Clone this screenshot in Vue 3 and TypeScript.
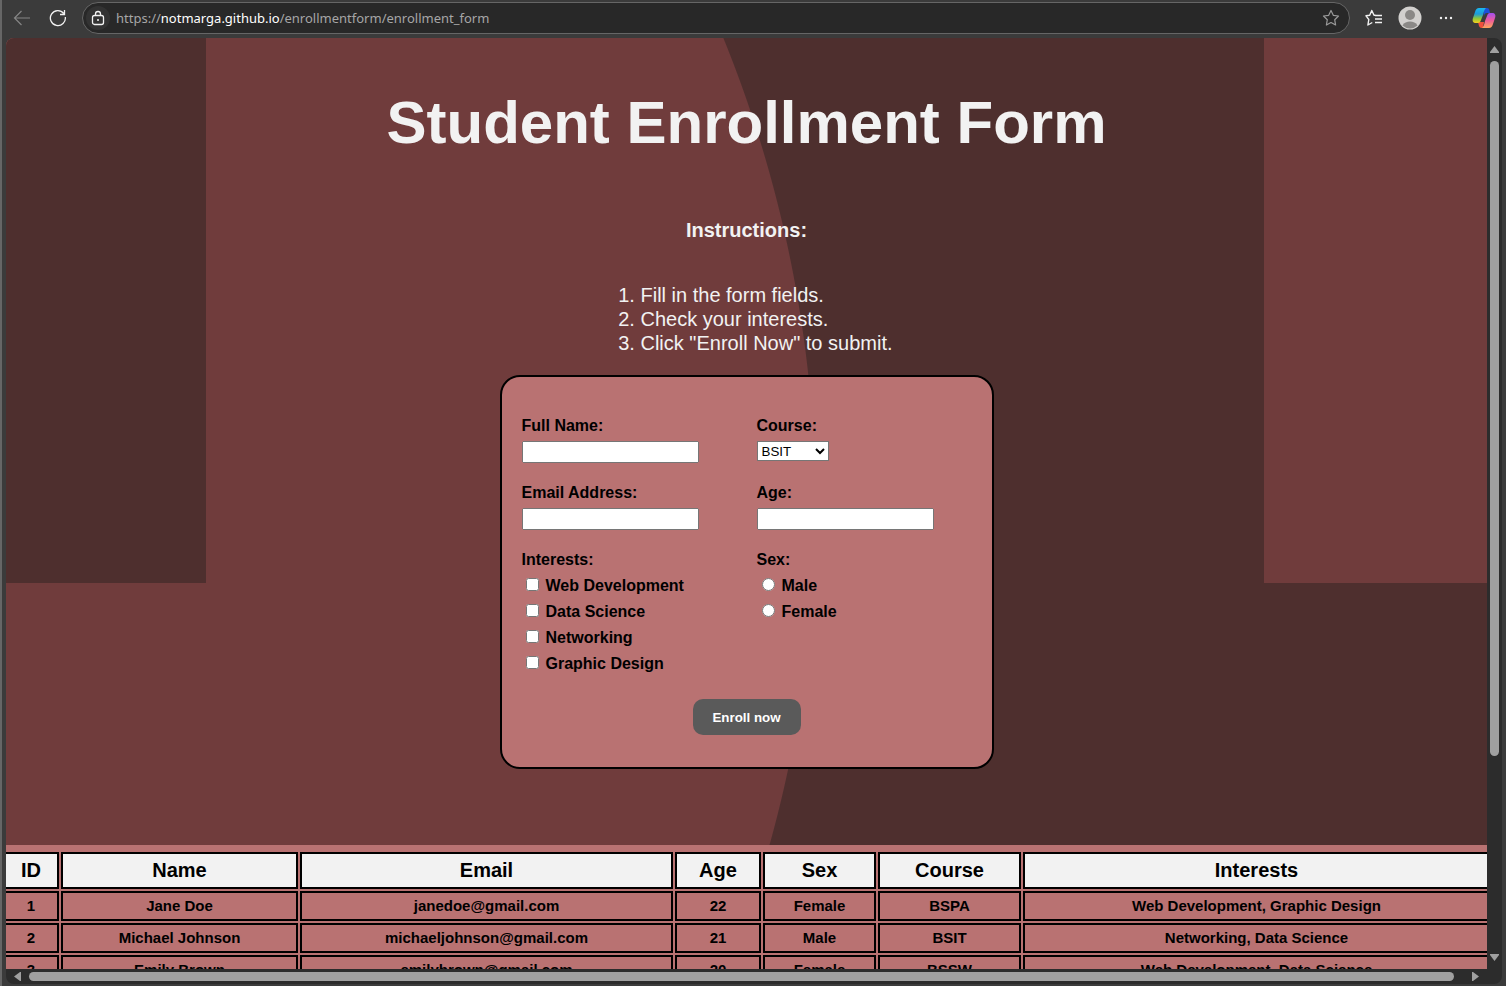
<script setup lang="ts">
import { reactive } from 'vue'

interface Enrollment {
  id: number
  name: string
  email: string
  age: number
  sex: string
  course: string
  interests: string
}

const steps: string[] = [
  'Fill in the form fields.',
  'Check your interests.',
  'Click "Enroll Now" to submit.',
]
const courses: string[] = ['BSIT', 'BSPA', 'BSSW']
const interestOptions: string[] = ['Web Development', 'Data Science', 'Networking', 'Graphic Design']
const sexes: string[] = ['Male', 'Female']
const columns: string[] = ['ID', 'Name', 'Email', 'Age', 'Sex', 'Course', 'Interests']

const form = reactive({
  name: '',
  email: '',
  course: 'BSIT',
  age: '',
  sex: '',
  interests: [] as string[],
})

const rows = reactive<Enrollment[]>([
  { id: 1, name: 'Jane Doe', email: 'janedoe@gmail.com', age: 22, sex: 'Female', course: 'BSPA', interests: 'Web Development, Graphic Design' },
  { id: 2, name: 'Michael Johnson', email: 'michaeljohnson@gmail.com', age: 21, sex: 'Male', course: 'BSIT', interests: 'Networking, Data Science' },
  { id: 3, name: 'Emily Brown', email: 'emilybrown@gmail.com', age: 20, sex: 'Female', course: 'BSSW', interests: 'Web Development, Data Science' },
])

function enroll(): void {
  rows.push({
    id: rows.length + 1,
    name: form.name,
    email: form.email,
    age: Number(form.age),
    sex: form.sex,
    course: form.course,
    interests: form.interests.join(', '),
  })
}
</script>

<template>
  <div class="window">
    <header class="toolbar">
      <button class="tool" type="button" aria-label="Back">
        <svg width="18" height="18" viewBox="0 0 18 18" fill="none" stroke="#858585" stroke-width="1.2"><path d="M17 9H2M8.500 2 1.500 9l7 7" /></svg>
      </button>
      <button class="tool" type="button" aria-label="Refresh">
        <svg width="18" height="18" viewBox="0 0 18 18" fill="none" stroke="#f2f2f2" stroke-width="1.300"><path d="M16.300 8A7.500 7.500 0 1 1 14.800 4.500M15.500 1v4.500H11" /></svg>
      </button>
      <div class="address">
        <button class="lock" type="button" aria-label="Site information">
          <svg width="14" height="16" viewBox="0 0 14 16" fill="none" stroke="#f2f2f2" stroke-width="1.300"><rect x="1.500" y="5.500" width="11" height="9" rx="2" /><path d="M4.500 5.500V4a2.500 2.500 0 0 1 5 0v1.500" /><circle cx="7" cy="10" r="1" fill="#f2f2f2" stroke="none" /></svg>
        </button>
        <span class="url">https://<b>notmarga.github.io</b>/enrollmentform/enrollment_form</span>
        <button class="star" type="button" aria-label="Add to favorites">
          <svg width="18" height="18" viewBox="0 0 18 18" fill="none" stroke="#9a9a9a" stroke-width="1.200" stroke-linejoin="round"><path d="m9 1.500 2.300 4.800 5.200.7-3.800 3.700.9 5.300L9 13.500 4.400 16l.9-5.300L1.500 7l5.200-.7z" /></svg>
        </button>
      </div>
      <button class="tool" type="button" aria-label="Favorites">
        <svg width="18" height="18" viewBox="0 0 18 18" fill="none" stroke="#f2f2f2" stroke-width="1.400" stroke-linejoin="round"><path d="M10.500 6.300H9L6.800 1.500 4.700 6.300 1 6.800l2.800 3.700-.9 5.500 4.400-2.500M10 6.500h7M10 10h7M10 13.500h7" /></svg>
      </button>
      <button class="tool" type="button" aria-label="Profile">
        <svg width="24" height="24" viewBox="0 0 24 24"><circle cx="12" cy="12" r="11.500" fill="#d2d0ce" /><circle cx="12" cy="9" r="5" fill="#8a8886" /><path d="M4.500 19.500C6 16.500 9 15.500 12 15.500s6 1 7.500 4a11 11 0 0 1-15 0z" fill="#8a8886" /></svg>
      </button>
      <button class="tool" type="button" aria-label="Settings and more">
        <svg width="14" height="4" viewBox="0 0 14 4" fill="#f2f2f2"><circle cx="2" cy="2" r="1.200" /><circle cx="7" cy="2" r="1.200" /><circle cx="12" cy="2" r="1.200" /></svg>
      </button>
      <button class="tool copilot" type="button" aria-label="Copilot">
        <svg width="24" height="22" viewBox="0 0 24 22">
          <defs>
            <linearGradient id="cool" x1="0" y1="0" x2="0" y2="1"><stop offset="0" stop-color="#1ab8f0" /><stop offset=".4" stop-color="#1d9bd8" /><stop offset=".7" stop-color="#8fc93a" /><stop offset="1" stop-color="#f5cf1c" /></linearGradient>
            <linearGradient id="warm" x1="0" y1="0" x2="0" y2="1"><stop offset="0" stop-color="#a24ff0" /><stop offset=".5" stop-color="#ee5c9a" /><stop offset="1" stop-color="#ffa65c" /></linearGradient>
          </defs>
          <path d="M11 1h4c2 0 2.500 1.500 3 5h-3c-2 0-2.500 1-3 3z" fill="#1c50d8" />
          <path d="M6 15h6l-1 6c-3 .5-4-1-4.500-4z" fill="#f0503c" />
          <path d="M7 1h7c-1.500 1-2 3-3 7l-2 5c-.6 2-1.500 3-3 3H4c-3 0-4-2-3-5L3 5c.7-2.500 2-4 4-4z" fill="url(#cool)" />
          <path d="M17 21h-7c1.500-1 2-3 3-7l2-5c.6-2 1.500-3 3-3h2c3 0 4 2 3 5l-2 6c-.7 2.500-2 4-4 4z" fill="url(#warm)" />
        </svg>
      </button>
    </header>

    <div class="viewport">
      <main class="page">
        <section class="hero">
          <h1>Student Enrollment Form</h1>
          <h2>Instructions:</h2>
          <ol>
            <li v-for="step in steps" :key="step">{{ step }}</li>
          </ol>

          <form class="card" @submit.prevent="enroll">
            <div class="fields">
              <div class="field">
                <label for="name">Full Name:</label>
                <input id="name" v-model="form.name" class="text" type="text" />
              </div>
              <div class="field">
                <label for="course">Course:</label>
                <select id="course" v-model="form.course">
                  <option v-for="course in courses" :key="course">{{ course }}</option>
                </select>
              </div>
              <div class="field">
                <label for="email">Email Address:</label>
                <input id="email" v-model="form.email" class="text" type="email" />
              </div>
              <div class="field">
                <label for="age">Age:</label>
                <input id="age" v-model="form.age" class="text" type="number" />
              </div>
              <fieldset>
                <legend>Interests:</legend>
                <label v-for="item in interestOptions" :key="item" class="option">
                  <input v-model="form.interests" type="checkbox" :value="item" />{{ item }}
                </label>
              </fieldset>
              <fieldset>
                <legend>Sex:</legend>
                <label v-for="sex in sexes" :key="sex" class="option">
                  <input v-model="form.sex" type="radio" name="sex" :value="sex" />{{ sex }}
                </label>
              </fieldset>
            </div>
            <button class="submit" type="submit">Enroll now</button>
          </form>
        </section>

        <section class="records">
          <table>
            <colgroup>
              <col v-for="column in columns" :key="column" :class="'col-' + column.toLowerCase()" />
            </colgroup>
            <thead>
              <tr>
                <th v-for="column in columns" :key="column" scope="col">{{ column }}</th>
              </tr>
            </thead>
            <tbody>
              <tr v-for="row in rows" :key="row.id">
                <td>{{ row.id }}</td>
                <td>{{ row.name }}</td>
                <td>{{ row.email }}</td>
                <td>{{ row.age }}</td>
                <td>{{ row.sex }}</td>
                <td>{{ row.course }}</td>
                <td>{{ row.interests }}</td>
              </tr>
            </tbody>
          </table>
        </section>
      </main>

      <div class="scroll vertical" aria-hidden="true">
        <svg width="9" height="7" viewBox="0 0 9 7"><path d="M4.500 0 9 6v1H0V6z" fill="#a0a0a0" /></svg>
        <div class="track"><div class="thumb"></div></div>
        <svg width="9" height="7" viewBox="0 0 9 7"><path d="M4.500 7 9 1V0H0v1z" fill="#a0a0a0" /></svg>
      </div>
      <div class="scroll horizontal" aria-hidden="true">
        <svg width="7" height="9" viewBox="0 0 7 9"><path d="M0 4.500 6 0h1v9H6z" fill="#a0a0a0" /></svg>
        <div class="track"><div class="thumb"></div></div>
        <svg width="7" height="9" viewBox="0 0 7 9"><path d="M7 4.500 1 0H0v9h1z" fill="#a0a0a0" /></svg>
      </div>
    </div>
  </div>
</template>

<style>
body {
  margin: 0;
  background: #3b3b3b;
}
</style>

<style scoped>
.window {
  display: flex;
  flex-direction: column;
  box-sizing: border-box;
  height: 100vh;
  padding: 0 4px 2px;
  border-left: 2px solid #666666;
  background: #3b3b3b;
  font-family: "Liberation Sans", Arial, sans-serif;
}

.toolbar {
  display: flex;
  align-items: center;
  flex: none;
  height: 36px;
  padding-bottom: 2px;
  margin-right: -2px;
}

.toolbar button {
  display: flex;
  align-items: center;
  justify-content: center;
  padding: 0;
  border: 0;
  background: none;
}

.tool {
  flex: none;
  width: 36px;
  height: 32px;
}

.tool:first-child {
  margin-left: -2px;
}

.copilot {
  width: 40px;
}

.address {
  display: flex;
  align-items: center;
  flex: 1;
  box-sizing: border-box;
  height: 32px;
  margin: 0 6px;
  padding: 0 9px 0 3px;
  border: 1px solid #666666;
  border-radius: 16px;
  background: #282828;
}

.toolbar .lock {
  width: 24px;
  height: 24px;
  border-radius: 12px;
  background: #333333;
}

.url {
  flex: 1;
  margin-left: 6px;
  color: #a6a6a6;
  font-family: "Noto Sans", "Open Sans", sans-serif;
  font-size: 13px;
  line-height: 20px;
}

.url b {
  color: #ffffff;
  font-weight: 400;
}

.viewport {
  display: grid;
  flex: 1;
  grid-template-rows: minmax(0, 1fr) 15px;
  grid-template-columns: minmax(0, 1fr) 15px;
  min-height: 0;
  overflow: hidden;
  border-radius: 8px;
  background: #2c2c2c;
}

.page {
  overflow: hidden;
  background: #b97272;
}

.hero {
  display: flex;
  flex-direction: column;
  align-items: center;
  padding: 50px 0 76px;
  background:
    linear-gradient(#703c3c, #703c3c) right top / 223px 545px no-repeat,
    linear-gradient(#4e2f2e, #4e2f2e) left top / 200px 545px no-repeat,
    radial-gradient(circle at -440px 471px, #703c3c 1249px, #4e2f2e 1250px);
  color: #f2f2f2;
}

h1 {
  margin: 0;
  font-size: 60px;
  line-height: 70px;
}

h2 {
  margin: 60px 0 0;
  font-size: 20px;
  line-height: 24px;
}

ol {
  margin: 41px 0 20px;
  padding-left: 40px;
  font-size: 20px;
  line-height: 24px;
}

.card {
  display: flex;
  flex-direction: column;
  align-items: center;
  box-sizing: border-box;
  width: 494px;
  padding: 38px 20px 32px;
  border: 2px solid #000000;
  border-radius: 20px;
  background: #b97272;
  color: #000000;
  font-size: 16px;
  font-weight: 700;
  line-height: 22px;
}

.fields {
  display: grid;
  grid-template-columns: 1fr 1fr;
  gap: 19px 20px;
  width: 100%;
}

.field {
  display: flex;
  flex-direction: column;
  align-items: flex-start;
  gap: 4px;
}

.text {
  box-sizing: border-box;
  width: 177px;
  height: 22px;
}

select {
  width: 72px;
  height: 20px;
  background: #ffffff;
  font-family: "Liberation Sans", Arial, sans-serif;
}

fieldset {
  min-width: 0;
  margin: 0;
  padding: 0;
  border: 0;
}

legend {
  margin-bottom: 2px;
  padding: 0;
}

.option {
  display: flex;
  align-items: center;
  height: 26px;
}

.option input {
  width: 13px;
  height: 13px;
  margin: 0 7px 4px 4px;
}

.option input[type="radio"] {
  margin-left: 5px;
}

.submit {
  width: 108px;
  height: 36px;
  margin-top: 22px;
  border: 0;
  border-radius: 10px;
  background: #5a5a5a;
  color: #ffffff;
  font-family: "Liberation Sans", Arial, sans-serif;
  font-weight: 700;
}

.records {
  padding-top: 5px;
}

table {
  width: calc(100% + 10px);
  margin: 0 -5px;
  border-spacing: 2px;
  table-layout: fixed;
  color: #000000;
  font-size: 15px;
  font-weight: 700;
  line-height: 18px;
  text-align: center;
}

th,
td {
  box-sizing: border-box;
  height: 30px;
  padding: 0;
  border: 2px solid #000000;
}

th {
  height: 37px;
  padding-bottom: 2px;
  background: #f2f2f2;
  font-size: 20px;
  line-height: 24px;
}

.col-id {
  width: 56px;
}

.col-name {
  width: 237px;
}

.col-email {
  width: 373px;
}

.col-age {
  width: 86px;
}

.col-sex {
  width: 113px;
}

.col-course {
  width: 143px;
}

.scroll {
  display: flex;
  align-items: center;
}

.vertical {
  flex-direction: column;
  padding: 8px 0;
}

.horizontal {
  padding: 0 8px;
}

.scroll svg {
  flex: none;
}

.track {
  display: flex;
  flex: 1;
}

.vertical .track {
  flex-direction: column;
  width: 9px;
  margin: 8px 0;
}

.horizontal .track {
  height: 9px;
  margin: 0 8px;
}

.thumb {
  border-radius: 5px;
  background: #a0a0a0;
}

.vertical .thumb {
  height: calc(79% - 4px);
}

.horizontal .thumb {
  width: calc(100% - 10px);
}
</style>
